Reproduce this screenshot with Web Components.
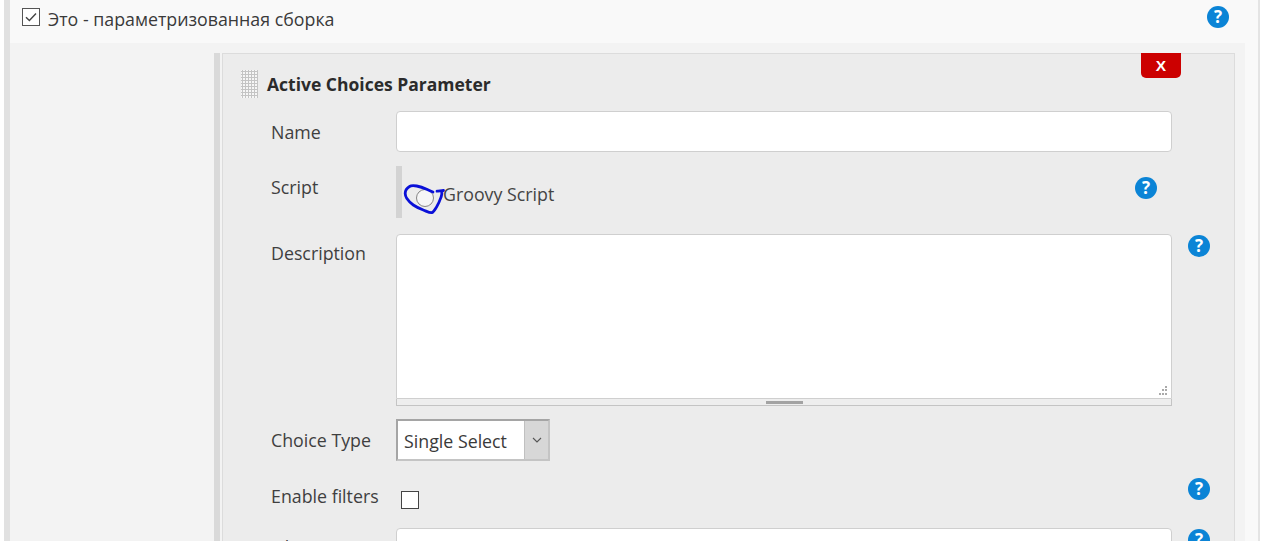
<!DOCTYPE html>
<html lang="ru"><head><meta charset="utf-8"><title>Active Choices Parameter</title>
<style>
html,body{margin:0;padding:0;background:#fff;height:541px;overflow:hidden}
body{font-family:"Open Sans","Noto Sans",sans-serif;color:#333}
</style></head><body>
<jk-page>
  <jk-header slot="header" label="Это - параметризованная сборка"></jk-header>
  <jk-param title-text="Active Choices Parameter">
    <jk-row label="Name"><jk-input h="41"></jk-input></jk-row>
    <jk-row label="Script" style="--row-gap:13px"><jk-radio label="Groovy Script"></jk-radio></jk-row>
    <jk-row label="Description" style="--row-gap:16px;--label-shift:-2px" help="1"><jk-textarea></jk-textarea></jk-row>
    <jk-row label="Choice Type" style="--row-gap:14px;height:42px"><jk-select value="Single Select"></jk-select></jk-row>
    <jk-row label="Enable filters" style="--row-gap:14px;height:39px" help="3"><jk-check></jk-check></jk-row>
    <jk-row label="Filter starts at" style="--row-gap:14px;--label-shift:-2px" help="1"><jk-input h="41"></jk-input></jk-row>
  </jk-param>
</jk-page>
<script>
const def=(n,html,extra={})=>{customElements.define(n,class extends HTMLElement{
  connectedCallback(){ if(this.shadowRoot) return;
    const s=this.attachShadow({mode:'open'});
    s.innerHTML=typeof html==='function'?html(this):html;
    extra.init&&extra.init(this,s);}
});};

def('jk-help',`<style>
:host{display:block;width:22px;height:22px}
div{width:22px;height:22px;border-radius:50%;background:#0b84d6;color:#fff;font:700 17px/22px "Open Sans",sans-serif;text-align:center}
</style><div>?</div>`);

def('jk-page',`<style>
:host{display:flex;flex-direction:column;box-sizing:border-box;margin-left:4px;width:1256px;height:541px;overflow:hidden;background:#f9f9f9;border-left:6px solid #e1e1e1;border-right:2px solid #e4e4e4}
.body{flex:1;margin-right:13px;background:#f3f3f3;padding:10px 0 0 204px}
</style><slot name="header"></slot><div class="body"><slot></slot></div>`);

def('jk-header',h=>`<style>
:host{display:flex;align-items:flex-start;height:43px;box-sizing:border-box;font-size:17.8px}
.cb{margin:8px 0 0 12px;width:18px;height:18px;box-sizing:border-box;border:1px solid #555;background:#fff;flex:none}
.cb svg{display:block}
.t{margin-left:8px;line-height:38px;color:#3a3a3a;white-space:nowrap}
jk-help{margin:6px 0 0 auto;margin-right:29px}
</style><div class="cb"><svg width="16" height="16" viewBox="0 0 16 16"><path d="M3 8.2l3.4 3.4L13 4.5" fill="none" stroke="#444" stroke-width="1.4"/></svg></div><span class="t">${h.getAttribute('label')}</span><jk-help></jk-help>`);

def('jk-param',h=>`<style>
:host{display:block;box-sizing:border-box;width:1021px;height:488px;border-left:6px solid #d9d9d9;padding-left:2px;overflow:hidden}
.box{position:relative;box-sizing:border-box;height:600px;background:#ececec;border:1px solid #dcdcdc;padding-left:48px}
.title{display:flex;align-items:flex-start;height:57px;margin-left:-30px}
.grip{width:17px;height:28px;margin-top:16px;background-color:#f6f6f6;background-image:radial-gradient(circle at 1.5px 1.5px,#c4c4c4 1px,transparent 1.2px);background-size:3px 3px}
h2{margin:18px 0 0 9px;font:700 17.5px/24px "Open Sans",sans-serif;color:#2b2b2b;white-space:nowrap}
.x{position:absolute;top:-1px;left:918px;width:40px;height:25px;background:#cc0000;border-radius:0 0 5px 5px;color:#fff;font:700 15.5px/25px "Liberation Sans",sans-serif;text-align:center}
</style><div class="box"><div class="title"><div class="grip"></div><h2>${h.getAttribute('title-text')}</h2></div><div class="x">X</div><slot></slot></div>`);

def('jk-row',h=>{const hp=h.getAttribute('help');return `<style>
:host{display:grid;grid-template-columns:125px 776px 22px;column-gap:0;margin-top:var(--row-gap,0);font-size:17.8px;color:#3f3f3f}
.l{line-height:42px;margin-top:var(--label-shift,0);white-space:nowrap}
.h{margin-left:16px;width:22px}
.f{min-width:0}
</style><div class="l">${h.getAttribute('label')}</div><div class="f"><slot></slot></div>${hp?`<jk-help class="h" style="margin-top:${hp}px"></jk-help>`:''}`});

def('jk-input',h=>`<style>
:host{display:block}
div{box-sizing:border-box;height:${h.getAttribute('h')}px;background:#fff;border:1px solid #cfcfcf;border-radius:4px}
</style><div></div>`);

def('jk-radio',h=>`<style>
:host{display:flex;position:relative;height:52px;box-sizing:border-box;border-left:6px solid #d3d3d3;font-size:17.8px;color:#444}
.c{width:18px;height:18px;box-sizing:border-box;border:1.5px solid #858585;border-radius:50%;background:#f6f6f6;margin:23px 0 0 14px;flex:none}
.t{margin-left:9px;line-height:56px;white-space:nowrap}
svg{position:absolute;left:-6px;top:0;overflow:visible;pointer-events:none}
jk-help{position:absolute;left:733px;top:11px}
</style><div class="c"></div><span class="t">${h.getAttribute('label')}</span>
<svg width="60" height="52" viewBox="396 166 60 52"><path d="M443.5 190.5C441 190.8 438.5 191 437 191.2M441.8 191C442 193 441.8 195 441.2 196.7C440 200 438.8 203.5 436.7 206.7C435.2 209 433.7 212.2 431.7 212.7C429.5 213 426.5 211.2 423.3 210C420 208.8 416.3 207 413.3 205C410.5 203.2 408.5 201 406.7 198.3C405.8 197 405.3 195.5 405.2 193.5C405.2 190.8 406.5 188.3 409.5 186.5C411 185.5 413.5 185.5 416.7 186C420 186.6 423 187.6 426.7 189.3C429 190.3 431 191.2 433 192" fill="none" stroke="#0a10d8" stroke-width="2.8" stroke-linejoin="round" stroke-linecap="round"/></svg><jk-help></jk-help>`);

def('jk-textarea',`<style>
:host{display:block;height:171px}
.a{position:relative;box-sizing:border-box;height:165px;background:#fff;border:1px solid #cfcfcf;border-radius:4px 4px 0 0}
.d{position:absolute;right:3px;bottom:2px}
.g{box-sizing:border-box;height:7px;border:1px solid #c4c4c4;border-top:0;background:#eee;display:flex;justify-content:center;align-items:center}
.g i{display:block;width:37px;height:3px;background:#a3a3a3}
</style><div class="a"><svg class="d" width="10" height="10" viewBox="0 0 10 10" fill="#aaa"><rect x="7" y="0" width="2" height="2"/><rect x="4" y="3" width="2" height="2"/><rect x="7" y="3" width="2" height="2"/><rect x="1" y="7" width="2" height="2"/><rect x="4" y="7" width="2" height="2"/><rect x="7" y="7" width="2" height="2"/></svg></div><div class="g"><i></i></div>`);

def('jk-select',h=>`<style>
:host{display:flex;box-sizing:border-box;width:154px;height:42px;border:2px solid #a5a5a5;border-right-color:#c4c4c4;border-bottom-color:#c4c4c4;background:#fff;font-size:17.8px;color:#3a3a3a}
.v{flex:1;padding-left:6px;line-height:40px;white-space:nowrap;overflow:hidden}
.b{width:23px;background:#d7d7d7;border-left:1px solid #c0c0c0;display:flex;align-items:center;justify-content:center}
</style><div class="v">${h.getAttribute('value')}</div><div class="b"><svg width="10" height="6" viewBox="0 0 10 6"><path d="M1 1l4 4 4-4" fill="none" stroke="#555" stroke-width="1.1"/></svg></div>`);

def('jk-check',`<style>
:host{display:block;box-sizing:border-box;width:18px;height:18px;margin:16px 0 0 5px;border:1px solid #444;background:#fff}
</style>`);
</script>
</body></html>
